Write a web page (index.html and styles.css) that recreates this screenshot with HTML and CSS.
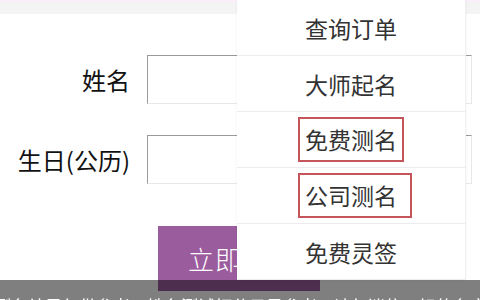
FILE: index.html
```html
<!DOCTYPE html>
<html lang="zh-CN">
<head>
  <meta charset="UTF-8" />
  <meta name="viewport" content="width=device-width, initial-scale=1" />
  <title>免费测名</title>
  <link rel="stylesheet" href="styles.css">
</head>
<body>

<div class="topbar"></div>

<form class="form" autocomplete="off" onsubmit="return false;">
  <div class="row">
    <label for="xingming">姓名</label>
    <input type="text" id="xingming" name="xingming" />
  </div>
  <div class="row row-birth">
    <label for="shengri">生日(公历)</label>
    <input type="text" id="shengri" name="shengri" />
  </div>
  <button type="button" class="btn">立即测名</button>
</form>

<ul class="menu">
  <li>查询订单</li>
  <li>大师起名</li>
  <li><span class="mark">免费测名</span></li>
  <li><span class="mark mark-wide">公司测名</span></li>
  <li>免费灵签</li>
</ul>

<div class="notice">测名结果仅供参考，姓名测试打分只是参考，请勿迷信，好的名字需要大师起名才能更好</div>

</body>
</html>
```

FILE: styles.css
```css
body {
  margin: 0;
  font-family: "Noto Sans CJK SC", "Noto Sans", sans-serif;
  background: #fff;
  color: #111;
  overflow: hidden;
}
.topbar {
  height: 12px;
  border-top: 2px solid #fbeefb;
  background: #f4f4f4;
}
.form {
  padding-top: 41px;
}
.row {
  display: flex;
  align-items: center;
}
.row label {
  width: 147px;
  padding-right: 17px;
  box-sizing: border-box;
  text-align: right;
  font-size: 24px;
  line-height: 1;
}
.row input {
  width: 325px;
  height: 49px;
  margin: 0;
  box-sizing: border-box;
  border: 1px solid;
  border-color: #9a9a9a #e8e8e8 #e8e8e8 #9a9a9a;
  outline: none;
}
.row-birth {
  margin-top: 31px;
}
.btn {
  display: block;
  margin: 42px 0 0 158px;
  width: 162px;
  height: 65px;
  border: none;
  background: #9b5c9e;
  color: #fff;
  font-family: "Liberation Serif", "Noto Sans CJK SC", serif;
  font-size: 26px;
  font-weight: 300;
  letter-spacing: 1px;
  padding: 0 0 0 6px;
}
.menu {
  position: absolute;
  top: 0;
  left: 237px;
  width: 228px;
  margin: 0;
  padding: 0;
  list-style: none;
  background: #fff;
  border-right: 1px solid #f0f0f0;
  box-shadow: 0 0 3px rgb(0 0 0 / 0.06);
}
.menu li {
  height: 55px;
  border-bottom: 1px solid #ececec;
  display: flex;
  align-items: center;
  justify-content: center;
  font-size: 23px;
  color: #333;
}
.mark {
  display: inline-block;
  padding: 4px 5px;
  line-height: 33px;
  border: 2px solid #c4555a;
}
.mark-wide {
  padding-right: 13px;
  margin-left: 8px;
}
.notice {
  position: fixed;
  left: -6px;
  right: 0;
  bottom: 0;
  height: 20px;
  padding-top: 16px;
  box-sizing: border-box;
  background: rgb(0 0 0 / 0.5);
  color: #fff;
  font-size: 17px;
  line-height: 20px;
  white-space: nowrap;
  overflow: hidden;
}
```
